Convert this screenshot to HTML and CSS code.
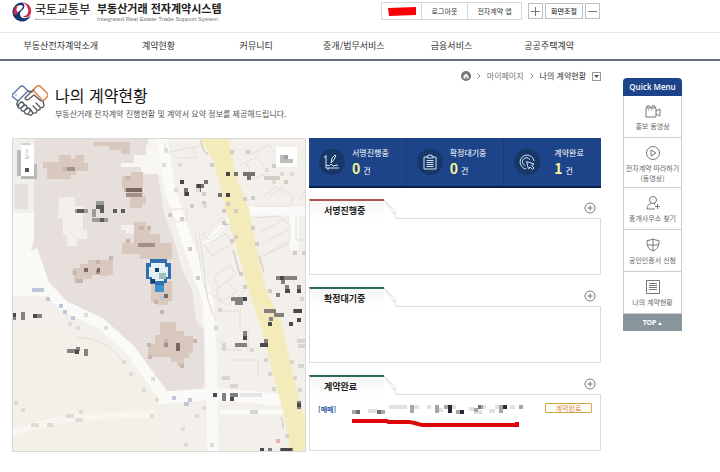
FILE: index.html
```html
<!DOCTYPE html>
<html lang="ko">
<head>
    <meta charset="UTF-8">
    <meta name="viewport" content="width=device-width, initial-scale=1.0">
    <title>나의 계약현황 - 부동산거래 전자계약시스템</title>
    <link rel="stylesheet" href="styles.css">
</head>
<body>
    <header class="header">
        <a class="logo" href="#">
            <svg class="logo-mark" viewBox="0 0 20 20" aria-hidden="true">
                <path d="M10 0.500A9.500 9.500 0 1 0 19 13C15 18 8 17 8 12C8 9 11 8 12 6C13 3 12 1 10 0.500Z" fill="#17376f"/>
                <path d="M9 3C5 3 3 6 4 9C5 12 9 8 11 5C11 4 10 3 9 3Z" fill="#fff"/>
                <path d="M11 0.500C18 1 21 8 18 13C16 16 12 16 11 14C15 14 17 11 16 7C15 4 14 2 11 0.500Z" fill="#d02a48"/>
                <path d="M2 12C1 8 3 4 6 3C4 6 4 9 6 11C5 13 3 13 2 12Z" fill="#d02a48"/>
            </svg>
            <span class="logo-text">
                <span class="ministry">국토교통부</span>
                <span class="ministry-en">Ministry of Land, Infrastructure and Transport</span>
            </span>
        </a>
        <a class="site-name" href="#">
            <span class="site-title">부동산거래 전자계약시스템</span>
            <span class="site-sub">Integrated Real Estate Trade Support System</span>
        </a>
        <div class="tools">
            <div class="user-menu">
                <span class="user-cell">
                    <svg class="redact" viewBox="0 0 28 9" aria-hidden="true"><path d="M0 1L28 0V8L1 9Z" fill="#fb0007"/></svg>
                </span>
                <a class="user-cell logout" href="#">로그아웃</a>
                <a class="user-cell app" href="#">전자계약 앱</a>
            </div>
            <button class="size-btn" aria-label="화면 확대"><svg viewBox="0 0 9 9"><path d="M4.500 0V9M0 4.500H9"/></svg></button>
            <button class="size-btn size-label">화면조절</button>
            <button class="size-btn" aria-label="화면 축소"><svg viewBox="0 0 9 9"><path d="M0 4.500H9"/></svg></button>
        </div>
    </header>

    <nav class="nav">
        <a href="#">부동산전자계약소개</a>
        <a href="#">계약현황</a>
        <a href="#">커뮤니티</a>
        <a href="#">중개/법무서비스</a>
        <a href="#">금융서비스</a>
        <a href="#">공공주택계약</a>
    </nav>

    <div class="page">
        <main class="main">
            <div class="breadcrumb">
                <svg class="home" viewBox="0 0 10 10" aria-hidden="true"><circle cx="5" cy="5" r="5" fill="#777"/><path d="M2.500 5L5 2.500L7.500 5V7.500H2.500Z" fill="#fff"/><path d="M4.300 7.500V5.500H5.700V7.500Z" fill="#777"/></svg>
                <svg class="arrow" viewBox="0 0 4 6" aria-hidden="true"><path d="M0.500 0.500L3 3L0.500 5.500"/></svg>
                <a href="#">마이페이지</a>
                <svg class="arrow" viewBox="0 0 4 6" aria-hidden="true"><path d="M0.500 0.500L3 3L0.500 5.500"/></svg>
                <span class="current">나의 계약현황</span>
                <button class="crumb-btn" aria-label="메뉴 열기"><svg viewBox="0 0 5 3"><path d="M0 0L2.500 3L5 0Z"/></svg></button>
            </div>

            <div class="page-title">
                <svg class="hands" viewBox="0 0 36 32" fill="none" stroke-linejoin="round" stroke-linecap="round" aria-hidden="true">
                    <path d="M1 9L8 2Q10 0 12 2L16 6L6 16L1 12Q-1 11 1 9Z" stroke="#5577a8" stroke-width="1.400"/>
                    <circle cx="4" cy="10" r=".7" fill="#5577a8"/>
                    <path d="M21 5L25 1Q27 0 29 2L35 8Q37 10 35 12L31 16Z" stroke="#e28250" stroke-width="1.600"/>
                    <path d="M16 6L20 7M31 16L32 20Q31 24 28 22Q29 26 25 25Q25 29 21 28Q19 32 16 29M29 16L22 10L17 14Q14 16 13 13L20 6L22 5M6 16L5 18Q4 21 7 21M9 17L6 20Q5 24 9 23L12 20Q12 17 9 17ZM13 20L9 23Q9 27 12 26L15 23Q15 20 13 20ZM16 23L12 26Q13 30 16 29L18 26Q18 23 16 23ZM24 18L28 22M21 21L25 25M18 24L21 28" stroke="#555a60" stroke-width="1.300"/>
                </svg>
                <div>
                    <h1>나의 계약현황</h1>
                    <p>부동산거래 전자계약 진행현황 및 계약서 요약 정보를 제공해드립니다.</p>
                </div>
            </div>

            <div class="board">
                <svg class="map" viewBox="12 138 294 314" preserveAspectRatio="xMidYMid slice" role="img" aria-label="지도">
                    <rect x="12" y="138" width="294" height="314" fill="#f3efeb"/>
                    <path d="M12 330L60 330L110 345L158 400V452H12Z" fill="#f4f0e8"/>
                    <path d="M12 138H34V215H12Z" fill="#f0efeb"/>
                    <path d="M12 213H36V250L52 296H12Z" fill="#f9f9f6"/>
                    <path d="M34 138H158V175L164 214L174 240L182 270L192 290L196 320L204 330V385L200 393H160L154 380L138 357L118 334L94 320L50 290L31 250L34 240Z" fill="#e6dfdb"/>
                    <path d="M148 138H162V174H141V167H121V163H134V155H146V145H148Z" fill="#f7f6f2"/>
                    <path d="M59 197H75V206H83V230H87V239H77V246H67V235H63V218H58Z" fill="#f3efec"/>
                    <path d="M121 225H138V234H126V230H121Z" fill="#f3efec"/>
                    <!-- roads -->
                    <g fill="none" stroke="#fafaf8">
                        <path d="M32 250L44 285L64 306L100 323L130 350L158 388L164 396" stroke-width="11"/>
                        <path d="M162 138L170 190L190 250L208 300L211 350L213 452" stroke-width="11"/>
                        <path d="M158 398L213 394L284 400" stroke-width="12"/>
                        <path d="M12 434L40 424L80 417L155 414" stroke-width="7" stroke="#f7f6f1"/>
                        <path d="M250 211H306M294 211V250" stroke-width="9"/>
                        <path d="M205 245L232 217" stroke-width="6"/>
                        <path d="M220 412H284" stroke-width="5"/>
                    </g>
                    <path d="M200 138H228L236 175L249 210L258 255L266 290L281 320L292 370L305 420V452H290L284 415L272 370L262 330L250 295L240 260L230 225L221 190L213 160Z" fill="#f3ebba"/>
                    <g fill="none" stroke="#dedad5" stroke-width=".8">
                        <path d="M165 142V153L200 146M178 158H197L193 146M170 210L187 208V220L175 222Z"/>
                        <path d="M203 235L222 217L228 224L209 240ZM205 245L226 234L233 243L212 256ZM214 276L230 265L236 274L218 288ZM216 290L227 281L237 292L220 302ZM199 232L208 300L216 320M195 230L203 280L212 315M202 252L206 290L227 306L246 290"/>
                        <path d="M255 206H290L293 197L281 188L270 195M262 198L275 187L285 195M254 218L278 216L290 225V240L261 257M260 232L286 219M262 244L290 229M263 256L290 243M296 217V240H306M299 200L306 190M240 165L256 157L268 170M250 155L269 145L276 154M246 162L253 178L268 174"/>
                        <path d="M75 337Q105 337 123 362M79 340L88 335"/>
                        <path d="M222 311H240V332M222 340V350H242M232 360H258V377M260 305L270 312M248 330V350" stroke-width="2" stroke="#ebe6e2"/>
                    </g>
                    <path d="M201 140Q202 152 208 154M224 225L229 224M233 250L240 275M259 256L264 272M281 417Q284 422 283 429" fill="none" stroke="#b9b4a2" stroke-width=".8"/>
                    <!-- buildings -->
                    <g fill="#d9c8be">
                        <path d="M93 142H130V154H121V150H109V146H93Z"/>
                        <path d="M43 162H59V155H71V159H75V155H84V163H88V171H76V175H71V179H47V168H43Z"/>
                        <path d="M122 176H131V172H143V196H146V204H142V208H130V196H126V188H122Z"/>
                        <path d="M134 222H146V230H150V234H160V243H172V259H140V254H122V243H134Z"/>
                        <path d="M73 268H80V264H88V260H109V256H113V275H109V276H101V275H92V279H83V283H74V275H72Z"/>
                        <path d="M151 281H172V301H168V305H158V302H151Z"/>
                        <path d="M160 322H176V331H184V336H193V353H189V358H184V366H177V362H171V357H148V344H155V335H160Z"/>
                        <path d="M15 184H28V209H15Z" fill="#e6dedb"/>
                    </g>
                    <g fill="none" stroke-width="4">
                        <path d="M63 169H75M124 190H130M126 178H130M139 228H144M147 228H151M126 241H130M96 262H100M109 258H113M73 273H77M76 281H80M79 281H83M154 302H158M160 312H164M164 341H168M180 366H184M193 341H197M148 357H152M147 345H151" stroke="#c6b5ad"/>
                        <path d="M126 195H142M138 245H155M96 272H100M164 345H168M67 169H75" stroke="#a38f83"/>
                        <path d="M126 190H142M84 270H88M97 270H100M176 345H180M176 349H180M164 296H168" stroke="#79685f"/>
                        <path d="M75 211H88M92 215H96M92 220H108M96 203H104M92 211H96M113 211H117M121 211H125" stroke="#9b9a98"/>
                        <path d="M77 211H84M100 211H104M113 211H117M121 211H125M96 207H104M100 220H104" stroke="#5d5c5d"/>
                        <path d="M12 318H16M21 318H25M33 316H42M67 351H79M84 351H88M84 354H88M76 349H80M21 314H25" stroke="#85827f"/>
                        <path d="M12 315H16M33 316H37M75 352H79" stroke="#4a494b"/>
                        <path d="M180 182H184M184 190H188M196 186H204M184 194H188M197 190H201M204 182H208M226 174H230M234 174H238M243 174H255M247 178H251M218 195H222M226 195H230" stroke="#777271"/>
                        <path d="M180 182H184M197 186H201M185 194H189M226 174H230M226 195H230" stroke="#454344"/>
                        <path d="M230 152H234M210 165H214M226 204H230M234 211H238M222 211H226M251 228H255M230 241H234M243 199H247M222 223H226M255 244H259M202 194H206M190 206H194M202 203H206M251 198H255M246 152H250M272 166H276M264 178H280M284 182H288M180 219H184M168 215H172M188 249H192M196 278H200M234 237H238M239 274H243M243 287H247M268 291H272M293 253H297M302 253H306" stroke="#d2cdc4"/>
                        <path d="M162 165H166M178 165H182M164 150H168M174 190H178M280 174H284M290 174H294M265 170H269M272 182H276M203 206H207M196 190H200M286 160H290M14 403H18M21 410H25M31 425H39M47 425H54M66 416H74M75 420H83M79 412H83M150 416H154M142 390H146M151 379H155M129 374H133M122 362H126M76 328H80M84 315H88M104 328H108M68 324H72M155 400H159M202 408H206M181 429H185M195 416H199M184 445H188M210 445H214" stroke="#dfdcd5"/>
                        <path d="M276 278H297M281 282H285M285 287H289M297 287H301M231 299H247M235 303H243M276 295H280M264 311H276M274 315H284M269 319H273M293 311H302M235 345H247M243 333H247M243 337H247M260 345H268M264 341H268M213 395H217M222 395H226M222 399H226M230 395H238M230 399H234M297 403H301M297 407H301M260 450H264M268 450H272M280 450H293" stroke="#848080"/>
                        <path d="M280 278H284M285 291H289M297 291H301M243 299H247M268 324H272M289 324H293M297 320H301M260 345H268M243 338H247M230 399H234M297 405H301M260 450H264M281 450H292M213 395H217M294 311H302M286 291H290" stroke="#49484a"/>
                        <path d="M290 362H294M293 378H297M268 374H272M272 389H276M285 436H289M264 360H268M297 341H306M298 346H306M298 366H304M222 349H226M222 378H230M230 386H238M250 350H254M222 345H226M250 412H258M218 310H222M214 328H218M298 390H302M300 299H304" stroke="#d8d4cf"/>
                        <path d="M240 395H262" stroke="#e6e4e2"/>
                        <path d="M32 290H44M46 299H50M63 312H67M71 318H75M59 306H63M172 398H176M184 404H189M188 400H192M160 298H164" stroke="#bfc6da"/>
                        <path d="M276 441H280" stroke="#eeb0ae"/>
                    </g>
                    <!-- marker -->
                    <path d="M150 259H167V263H171V279H167V283H164V292H155V284H150V279H146V263H150Z" fill="#2f6fae"/>
                    <path d="M151 263H165V267H168V277H164V281H152V277H149V267H151Z" fill="#e4f0f6"/>
                    <path d="M155 268H159V272H155ZM151 279H155V283H151Z" fill="#17416c"/>
                    <path d="M159 273H166V279H159Z" fill="#a3bcbd"/>
                    <path d="M155 285H164V292H155Z" fill="#3a91cd"/>
                    <!-- zoom and layer controls -->
                    <path d="M17 150H21V176H17ZM21 176H37V179H21ZM33 164H37V178H33Z" fill="#bcb9b7"/>
                    <rect x="21" y="145" width="13" height="31" fill="#fff"/>
                    <path d="M27 149V153M25 154L29 157M25 158H29M21 144H30" stroke="#b5b5b5" fill="none"/>
                    <rect x="25" y="168" width="4" height="4" fill="#555"/>
                    <rect x="276" y="147" width="21" height="20" fill="#fff"/>
                    <path d="M280 155H285V159H293V163H280Z" fill="#bdbdbd"/>
                    <path d="M284 155H288V159H284Z" fill="#a1a1a1"/>
                    <rect x="12.500" y="138.500" width="293" height="313" fill="none" stroke="#d9d9d5"/>
                </svg>

                <div class="status">
                    <div class="summary">
                        <a class="stat" href="#">
                            <svg class="stat-icon" viewBox="0 0 26 26" aria-hidden="true"><circle cx="13" cy="13" r="13"/><path d="M7 6V19H20M7 16L10 17L12 15L14 17L19 16M12 14L13 9L16 6L17 7L14 12L12 14M5 8H7M9 19V21"/></svg>
                            <span><span class="stat-name">서명진행중</span><span class="stat-count"><b>0</b>건</span></span>
                        </a>
                        <a class="stat" href="#">
                            <svg class="stat-icon" viewBox="0 0 26 26" aria-hidden="true"><circle cx="13" cy="13" r="13"/><path d="M10 8H7V20H19V8H16M10 7H11.500V6H14.500V7H16V9H10ZM9.500 11.500H16.500M9.500 13.500H16.500M9.500 15.500H16.500M9.500 17.500H16.500"/></svg>
                            <span><span class="stat-name">확정대기중</span><span class="stat-count"><b>0</b>건</span></span>
                        </a>
                        <a class="stat stat-done" href="#">
                            <svg class="stat-icon" viewBox="0 0 26 26" aria-hidden="true"><circle cx="13" cy="13" r="13"/><path d="M12 20A7 7 0 1 1 20 12M11 16.500A4 4 0 1 1 16 11M12.500 12.500L20 15L17.500 16.500L20 19L18.500 20.500L16 18L14.500 20Z"/></svg>
                            <span><span class="stat-name">계약완료</span><span class="stat-count"><b>1</b>건</span></span>
                        </a>
                    </div>

                    <section class="panel panel-red">
                        <div class="panel-head">
                            <h2>서명진행중</h2>
                            <svg class="fold" viewBox="0 0 12 20" aria-hidden="true"><path d="M0 1L12 13V19.500M0 1L9 14L12 13" fill="#f3f3f3" stroke="#ddd"/></svg>
                            <div class="panel-line"><button class="more" aria-label="서명진행중 더보기"><svg viewBox="0 0 12 12"><circle cx="6" cy="6" r="5"/><path d="M6 3.500V8.500M3.500 6H8.500"/></svg></button></div>
                        </div>
                        <div class="panel-body"></div>
                    </section>

                    <section class="panel panel-green">
                        <div class="panel-head">
                            <h2>확정대기중</h2>
                            <svg class="fold" viewBox="0 0 12 20" aria-hidden="true"><path d="M0 1L12 13V19.500M0 1L9 14L12 13" fill="#f3f3f3" stroke="#ddd"/></svg>
                            <div class="panel-line"><button class="more" aria-label="확정대기중 더보기"><svg viewBox="0 0 12 12"><circle cx="6" cy="6" r="5"/><path d="M6 3.500V8.500M3.500 6H8.500"/></svg></button></div>
                        </div>
                        <div class="panel-body"></div>
                    </section>

                    <section class="panel panel-green">
                        <div class="panel-head">
                            <h2>계약완료</h2>
                            <svg class="fold" viewBox="0 0 12 20" aria-hidden="true"><path d="M0 1L12 13V19.500M0 1L9 14L12 13" fill="#f3f3f3" stroke="#ddd"/></svg>
                            <div class="panel-line"><button class="more" aria-label="계약완료 더보기"><svg viewBox="0 0 12 12"><circle cx="6" cy="6" r="5"/><path d="M6 3.500V8.500M3.500 6H8.500"/></svg></button></div>
                        </div>
                        <div class="panel-body">
                            <div class="contract">
                                <a class="deal" href="#">[매매]</a>
                                <svg class="address" viewBox="0 0 172 24" aria-hidden="true">
                                    <g fill="none" stroke-width="4">
                                        <path d="M37 3H55M59 3H67M75 3H79M16 7H25M87 6H91M100 3H104M117 5H122M130 3H134M137 7H143M143 3H147M158 3H163M122 8H130" stroke="#dde3e4"/>
                                        <path d="M0 8H8M25 8H33M83 3H87M83 7H87M122 6H126M127 3H131M147 3H155M147 7H151M167 3H171M104 8H112M58 3H62M58 7H62M92 3H96" stroke="#aaa6a2"/>
                                        <path d="M96 3H100M96 7H100M108 8H112M151 3H155" stroke="#252b3b"/>
                                        <path d="M25 8H29M126 3H129M4 8H8" stroke="#6d7078"/>
                                    </g>
                                    <path d="M0 15H35L37 16H57L63 17L70 19H163V18H167V23H70L58 20H36L34 19H0Z" fill="#dd0508"/>
                                </svg>
                                <button class="badge">계약완료</button>
                            </div>
                        </div>
                    </section>
                </div>
            </div>
        </main>

        <aside class="quick">
            <h2>Quick Menu</h2>
            <a href="#">
                <svg viewBox="0 0 16 16"><path d="M1 5H11V14H1ZM11 8L15 6V13L11 11M2 5V3H5V5M7 5V3H10V5M3 7H4M6 7H7"/></svg>
                홍보 동영상
            </a>
            <a class="tall" href="#">
                <svg viewBox="0 0 16 16"><circle cx="8" cy="8" r="6.500"/><path d="M6 5L11 8L6 11Z"/></svg>
                전자계약 따라하기<br>(동영상)
            </a>
            <a href="#">
                <svg viewBox="0 0 16 16"><circle cx="8" cy="5" r="3.500"/><path d="M6 8C5 10 2 9 2 14H10M9 8L10 10M12.500 9V14M10 11.500H15"/></svg>
                중개사무소 찾기
            </a>
            <a href="#">
                <svg viewBox="0 0 16 16"><path d="M8 2C6 3 4 3.500 2 3.500C2 9 3 12 8 14C13 12 14 9 14 3.500C12 3.500 10 3 8 2ZM8 2V14M2 8H14"/></svg>
                공인인증서 신청
            </a>
            <a href="#">
                <svg viewBox="0 0 16 16"><path d="M1.500 1.500H14.500V14.500H1.500ZM4 4.500H12M4 6.500H12M4 8.500H12M4 10.500H12"/></svg>
                나의 계약현황
            </a>
            <button class="top-btn">TOP <svg viewBox="0 0 4 3"><path d="M0 3L2 0L4 3Z"/></svg></button>
        </aside>
    </div>
</body>
</html>
```

FILE: styles.css
```css
* {
    box-sizing: border-box;
}
body {
    margin: 0;
    background: #fff;
    color: #444;
    font-family: "Noto Sans CJK KR", "Noto Sans", sans-serif;
    font-size: 8px;
    line-height: 12px;
}
a {
    color: inherit;
    text-decoration: none;
}
h1, h2, p {
    margin: 0;
}
button {
    padding: 0;
    border: 0;
    background: none;
    color: inherit;
    font-family: inherit;
    cursor: pointer;
}

/* header */
.header {
    display: flex;
    height: 33px;
    padding: 2px 120px 0 12px;
    border-bottom: 1px solid #e6e6e6;
}
.logo {
    display: flex;
    gap: 3px;
    width: 85px;
}
.logo-mark {
    width: 20px;
    height: 20px;
}
.logo-text {
    white-space: nowrap;
}
.ministry {
    display: block;
    font-size: 12px;
    font-weight: 500;
    line-height: 14px;
    color: #333;
}
.ministry-en {
    display: block;
    font-family: "DejaVu Sans", sans-serif;
    font-size: 2px;
    line-height: 6px;
    color: #222;
}
.site-name {
    white-space: nowrap;
}
.site-title {
    display: block;
    font-size: 11px;
    font-weight: 700;
    line-height: 12px;
    color: #222;
}
.site-sub {
    display: block;
    font-family: "Liberation Sans", Arial, sans-serif;
    font-size: 6px;
    line-height: 10px;
    color: #777;
}
.tools {
    display: flex;
    gap: 2px;
    margin-left: auto;
    font-size: 7px;
    color: #333;
}
.user-menu {
    display: flex;
    height: 18px;
    margin-right: 4px;
    border: 1px solid #d5d8dc;
}
.user-cell {
    display: flex;
    align-items: center;
    justify-content: center;
    width: 39px;
}
.user-cell + .user-cell {
    border-left: 1px solid #d5d8dc;
}
.redact {
    width: 28px;
    height: 9px;
}
.logout {
    width: 46px;
}
.app {
    width: 54px;
}
.size-btn {
    display: flex;
    align-items: center;
    justify-content: center;
    width: 15px;
    height: 16px;
    margin-top: 1px;
    border: 1px solid #b9c0c8;
}
.size-btn svg {
    width: 9px;
    height: 9px;
    stroke: #777;
}
.size-label {
    width: 38px;
    font-size: 7px;
    font-weight: 500;
}

/* main menu */
.nav {
    display: flex;
    height: 28px;
    padding: 0 122px 0 12px;
    border-bottom: 2px solid #677079;
    font-size: 9px;
    line-height: 26px;
    color: #333;
}
.nav a {
    flex: 1;
    text-align: center;
    white-space: nowrap;
}

.page {
    display: flex;
    align-items: flex-start;
    gap: 22px;
    padding: 8px 38px 20px 12px;
}
.main {
    flex: 1;
}
.breadcrumb {
    display: flex;
    align-items: center;
    justify-content: flex-end;
    gap: 6px;
    height: 14px;
    color: #777;
}
.home {
    width: 10px;
    height: 10px;
}
.arrow {
    width: 4px;
    height: 6px;
    fill: none;
    stroke: #888;
}
.current {
    color: #333;
}
.crumb-btn {
    display: flex;
    align-items: center;
    justify-content: center;
    width: 9px;
    height: 9px;
    border: 1px solid #999;
}
.crumb-btn svg {
    width: 5px;
    height: 3px;
    fill: #555;
}
.page-title {
    display: flex;
    gap: 7px;
    height: 36px;
    margin-bottom: 19px;
}
.hands {
    width: 36px;
    height: 32px;
    margin-top: 2px;
}
.page-title h1 {
    font-size: 16px;
    font-weight: 400;
    line-height: 24px;
    color: #111;
}
.page-title p {
    line-height: 14px;
    color: #555;
}

.board {
    display: grid;
    grid-template-columns: 294fr 292fr;
    gap: 3px;
}
.map {
    width: 100%;
    height: 314px;
}

/* contract counts */
.summary {
    display: flex;
    height: 50px;
    margin-bottom: 11px;
    background: #1d4488;
    border-bottom: 2px solid #071f4d;
    color: #fff;
}
.stat {
    display: flex;
    flex: 1;
    align-items: center;
    gap: 7px;
    padding-left: 10px;
}
.stat + .stat {
    border-left: 1px solid #193b78;
}
.stat-done {
    gap: 14px;
}
.stat-icon {
    width: 26px;
    height: 26px;
    fill: none;
    stroke: #d5e4f5;
}
.stat-icon circle {
    fill: #163767;
    stroke: none;
}
.stat-name {
    display: block;
    line-height: 14px;
    white-space: nowrap;
}
.stat-count {
    display: flex;
    align-items: baseline;
    gap: 3px;
    line-height: 16px;
}
.stat-count b {
    font-size: 14px;
    color: #f8f59a;
}

/* contract lists */
.panel {
    margin-bottom: 12px;
}
.panel:last-child {
    margin-bottom: 0;
}
.panel-head {
    display: flex;
    height: 20px;
}
.panel-head h2 {
    width: 75px;
    padding-left: 14px;
    border-top: 2px solid #2b6c5f;
    border-left: 1px solid #ddd;
    background: linear-gradient(#f6f6f6, #fff);
    font-size: 9px;
    font-weight: 700;
    line-height: 20px;
    color: #222;
}
.panel-red h2 {
    border-top-color: #b0504f;
}
.fold {
    width: 12px;
    height: 20px;
}
.panel-line {
    display: flex;
    flex: 1;
    justify-content: flex-end;
    padding: 3px 5px 0 0;
    border-bottom: 1px solid #ddd;
}
.more {
    width: 12px;
    height: 12px;
}
.more svg {
    display: block;
    fill: none;
    stroke: #777;
}
.panel-body {
    height: 56px;
    padding: 7px 8px 0 8px;
    border: 1px solid #ddd;
    border-top: 0;
}
.contract {
    display: flex;
    align-items: flex-start;
    font-size: 7px;
}
.deal {
    width: 34px;
    font-weight: 700;
    line-height: 14px;
    color: #2d59a3;
}
.address {
    width: 172px;
    height: 24px;
    margin-top: 2px;
}
.badge {
    width: 47px;
    height: 10px;
    margin: 1px 0 0 auto;
    border: 1px solid #d0a548;
    border-radius: 1px;
    font-size: 7px;
    line-height: 8px;
    color: #dc8b3a;
}

/* quick menu */
.quick {
    width: 59px;
    margin-top: 9px;
    font-size: 7px;
    line-height: 10px;
    text-align: center;
    color: #666;
}
.quick h2 {
    height: 18px;
    border-radius: 4px 4px 0 0;
    background: #1d4488;
    font-family: "Open Sans", "Noto Sans", sans-serif;
    font-size: 8px;
    font-weight: 600;
    line-height: 18px;
    color: #fff;
}
.quick a {
    display: block;
    height: 42px;
    padding-top: 7px;
    border: 1px solid #ccc;
    border-top: 0;
    white-space: nowrap;
}
.quick a svg {
    display: block;
    width: 16px;
    height: 16px;
    margin: 0 auto 2px;
    fill: none;
    stroke: #777;
}
.quick .tall {
    height: 50px;
}
.top-btn {
    width: 100%;
    height: 17px;
    background: #88959b;
    font-family: "Noto Sans", sans-serif;
    font-size: 7px;
    font-weight: 700;
    color: #fff;
}
.top-btn svg {
    width: 4px;
    height: 3px;
    fill: #fff;
}
```
